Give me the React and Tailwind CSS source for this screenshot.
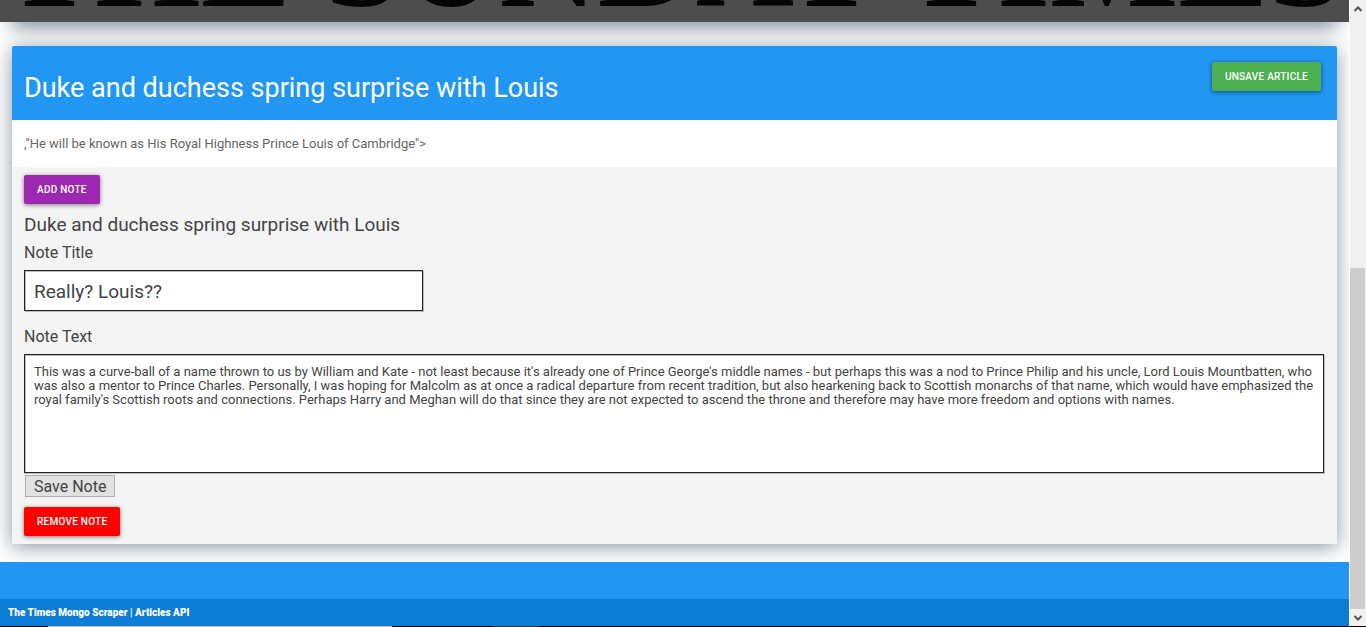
import { useState } from "react";

const NOTE =
  "This was a curve-ball of a name thrown to us by William and Kate - not least because it's already one of Prince George's middle names - but perhaps this was a nod to Prince Philip and his uncle, Lord Louis Mountbatten, who was also a mentor to Prince Charles. Personally, I was hoping for Malcolm as at once a radical departure from recent tradition, but also hearkening back to Scottish monarchs of that name, which would have emphasized the royal family's Scottish roots and connections. Perhaps Harry and Meghan will do that since they are not expected to ascend the throne and therefore may have more freedom and options with names.";

const ARTICLE = "Duke and duchess spring surprise with Louis";

function Masthead() {
  return (
    <>
      <header className="relative z-10 flex h-[22px] items-end justify-center overflow-hidden bg-[#4d4d4d]">
        <h1 className="font-['Liberation_Serif',serif] text-[136px] leading-[124px] font-bold whitespace-nowrap text-[#050505]">
          THE SUNDAY TIMES
        </h1>
      </header>
      <div aria-hidden="true" className="mx-3 -mt-5 h-5 shadow-[0_4px_20px_rgba(55,80,105,0.75)]" />
    </>
  );
}

function ActionButton({ className, children }) {
  return (
    <button
      type="button"
      className={`block h-[29px] rounded-xs px-[13px] text-[10px] font-medium tracking-wide text-white uppercase shadow-[0_1px_4px_rgba(0,0,0,0.5)] ${className}`}
    >
      {children}
    </button>
  );
}

function ArticleCard() {
  const [title, setTitle] = useState("Really? Louis??");
  const [text, setText] = useState(NOTE);
  return (
    <article className="mx-3 mt-6 rounded-t-xs bg-white shadow-[0_3px_20px_rgba(55,80,105,0.6)]">
      <div className="flex h-[74px] items-start justify-between rounded-t-xs bg-[#2196f3] pr-4 pl-3">
        <h2 className="pt-6 text-[27px] leading-9 text-white">{ARTICLE}</h2>
        <div className="pt-4">
          <ActionButton className="bg-[#4caf50]">Unsave Article</ActionButton>
        </div>
      </div>
      <p className="px-3 pt-[14px] pb-[13px] text-[13px] leading-5 text-[#666]">
        {',"He will be known as His Royal Highness Prince Louis of Cambridge">'}
      </p>
      <div className="bg-[#f4f4f4] px-3 py-2 text-[#444]">
        <ActionButton className="bg-[#9c27b0]">Add Note</ActionButton>
        <h3 className="mt-[9px] text-[19px] leading-6">{ARTICLE}</h3>
        <form onSubmit={(e) => e.preventDefault()}>
          <label htmlFor="note-title" className="mt-1 block text-base leading-6">
            Note Title
          </label>
          <input
            id="note-title"
            value={title}
            onChange={(e) => setTitle(e.target.value)}
            className="mt-[5px] block h-[41px] w-full max-w-[399px] border border-[#222] bg-white px-[9px] pt-px text-[19px] shadow-[inset_1px_1px_0_#bbb,1px_1px_0_#bbb] outline-none"
          />
          <label htmlFor="note-text" className="mt-[14px] block text-base leading-6">
            Note Text
          </label>
          <div className="mt-[5px] pr-px">
            <textarea
              id="note-text"
              value={text}
              onChange={(e) => setText(e.target.value)}
              className="block h-[119px] w-full resize-none border border-[#222] bg-white px-[9px] py-[10px] text-[13px] leading-[14px] shadow-[inset_1px_1px_0_#bbb,1px_1px_0_#bbb] outline-none"
            />
          </div>
          <button
            type="submit"
            className="mt-[2px] ml-px block h-[22px] border border-[#adadad] bg-[#e1e1e1] px-2 pt-px text-base leading-5"
          >
            Save Note
          </button>
        </form>
        <ActionButton className="mt-[10px] bg-[#ff0000]">Remove Note</ActionButton>
      </div>
    </article>
  );
}

function Footer() {
  return (
    <footer className="relative mt-[18px] bg-[#2196f3] pt-[37px]">
      <p className="bg-[#0d7cd6] px-2 text-[10px] leading-[27px] font-black text-white">
        The Times Mongo Scraper | Articles API
      </p>
    </footer>
  );
}

function ScrollRail() {
  return (
    <div aria-hidden="true" className="flex w-[17px] shrink-0 flex-col border-l border-white bg-[#f0f0f0]">
      <div className="flex h-[17px] items-center justify-center">
        <svg width="8" height="6" viewBox="0 0 8 6" fill="none" stroke="#555" strokeWidth="2">
          <path d="M0.5 5 4 1.5 7.5 5" />
        </svg>
      </div>
      <div className="flex-[251]" />
      <div className="mr-px flex-[341] bg-[#cdcdcd]" />
      <div className="flex h-[17px] items-center justify-center">
        <svg width="8" height="6" viewBox="0 0 8 6" fill="none" stroke="#555" strokeWidth="2">
          <path d="M0.5 1 4 4.5 7.5 1" />
        </svg>
      </div>
    </div>
  );
}

export default function App() {
  return (
    <div className="bg-white font-['Roboto',sans-serif]">
      <div className="flex">
        <div className="min-w-0 flex-1 overflow-hidden">
          <Masthead />
          <main>
            <ArticleCard />
          </main>
          <Footer />
        </div>
        <ScrollRail />
      </div>
      <div aria-hidden="true" className="flex h-px bg-black">
        <div className="ml-12 w-[344px] bg-[#bbb]" />
        <div className="ml-[100px] w-12 bg-[#333]" />
      </div>
    </div>
  );
}
